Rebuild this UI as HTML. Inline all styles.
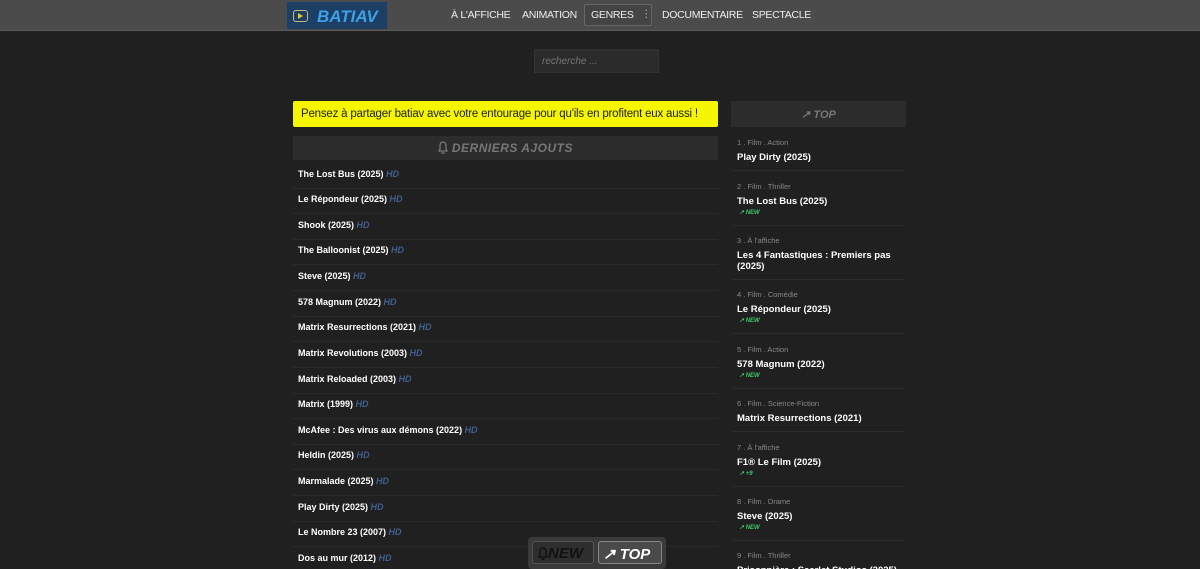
<!DOCTYPE html>
<html><head><meta charset="utf-8"><style>
*{box-sizing:border-box;margin:0;padding:0}
html,body{width:1200px;height:569px;overflow:hidden}
body{background:#202020;font-family:"Liberation Sans",Arial,sans-serif;position:relative;color:#fff}
.hdr{position:absolute;left:0;top:0;width:1200px;height:31px;background:#4b4b4b;border-bottom:1px solid #5a5a5a}
.logo{position:absolute;left:287px;top:2px;width:100px;height:27px;background:#1d3f66;overflow:hidden}
.logo .ic{position:absolute;left:6px;top:8px;width:15px;height:12px;border:1.5px solid #c9b878;border-radius:3px}
.logo .ic:after{content:"";position:absolute;left:4px;top:2px;border-left:5px solid #e3c03a;border-top:3px solid transparent;border-bottom:3px solid transparent}
.logo b{position:absolute;left:30px;top:5px;font-size:17px;font-style:italic;color:#3ea0e6}
.nav{position:absolute;top:9px;font-size:10.5px;color:#eee;white-space:nowrap;letter-spacing:-0.3px}
.gen{position:absolute;left:584px;top:4px;width:68px;height:22px;border:1px solid #666;background:#444;border-radius:2px}
.search{position:absolute;left:534px;top:49px;width:125px;height:24px;background:#2b2b2b;border:1px solid #333;font-size:10px;font-style:italic;color:#777;padding:6px 0 0 7px}
.yel{position:absolute;left:293px;top:101px;width:425px;height:26px;background:#f6f600;color:#222;font-size:11.5px;padding:7px 0 0 8px;border-radius:2px;white-space:nowrap;letter-spacing:-0.2px}
.dh{position:absolute;left:293px;top:136px;width:425px;height:24px;background:#2c2c2c;color:#777;font-size:12px;font-weight:bold;font-style:italic;text-align:center;padding-top:5px;letter-spacing:.5px}
.row{position:absolute;left:293px;width:425px;height:25px;border-bottom:1px solid #2a2a2a;font-size:9px;font-weight:bold;padding:5px 0 0 5px}
.row i{color:#3f5f8f;font-weight:bold}
.th{position:absolute;left:731px;top:101px;width:175px;height:26px;background:#2c2c2c;color:#777;font-size:11px;font-weight:bold;font-style:italic;text-align:center;padding-top:7px}
.cat{position:absolute;left:737px;font-size:7.5px;color:#888}
.tt{position:absolute;left:737px;font-size:9.5px;font-weight:bold;width:165px;line-height:11px}
.nw{position:absolute;left:739px;font-size:6px;color:#3cc86a;font-style:italic;font-weight:bold}
.sep{position:absolute;left:733px;width:172px;border-top:1px solid #2c2c2c}
.fb{position:absolute;left:528px;top:537px;width:138px;height:32px;background:#3a3a3a;border-radius:4px}
.fb div{position:absolute;top:4px;height:23px;border:1px solid #555;border-radius:3px;font-weight:bold;font-style:italic;font-size:15px;padding-top:3px;white-space:nowrap}
svg{vertical-align:-2px}
</style></head><body>
<div class="hdr">
<div class="logo"><div class="ic"></div><b>BATIAV</b></div>
<span class="nav" style="left:451px">À L'AFFICHE</span>
<span class="nav" style="left:522px">ANIMATION</span>
<div class="gen"><span class="nav" style="left:6px;top:4px">GENRES</span><span class="nav" style="left:56px;top:3px;color:#aaa">⋮</span></div>
<span class="nav" style="left:662px">DOCUMENTAIRE</span>
<span class="nav" style="left:752px">SPECTACLE</span>
</div>
<div class="search">recherche ...</div>
<div class="yel">Pensez à partager batiav avec votre entourage pour qu'ils en profitent eux aussi !</div>
<div class="dh"><svg width="10" height="13" viewBox="0 0 10 13"><path d="M5 1C2.8 1 2 3 2 5v3L1 10h8L8 8V5C8 3 7.2 1 5 1zM3.8 11.2a1.2 1.2 0 0 0 2.4 0" fill="none" stroke="#777" stroke-width="1.3"/></svg> DERNIERS AJOUTS</div>
<div class="row" style="top:164px">The Lost Bus (2025) <i>HD</i></div>
<div class="row" style="top:189px">Le Répondeur (2025) <i>HD</i></div>
<div class="row" style="top:215px">Shook (2025) <i>HD</i></div>
<div class="row" style="top:240px">The Balloonist (2025) <i>HD</i></div>
<div class="row" style="top:266px">Steve (2025) <i>HD</i></div>
<div class="row" style="top:292px">578 Magnum (2022) <i>HD</i></div>
<div class="row" style="top:317px">Matrix Resurrections (2021) <i>HD</i></div>
<div class="row" style="top:343px">Matrix Revolutions (2003) <i>HD</i></div>
<div class="row" style="top:369px">Matrix Reloaded (2003) <i>HD</i></div>
<div class="row" style="top:394px">Matrix (1999) <i>HD</i></div>
<div class="row" style="top:420px">McAfee : Des virus aux démons (2022) <i>HD</i></div>
<div class="row" style="top:445px">Heldin (2025) <i>HD</i></div>
<div class="row" style="top:471px">Marmalade (2025) <i>HD</i></div>
<div class="row" style="top:497px">Play Dirty (2025) <i>HD</i></div>
<div class="row" style="top:522px">Le Nombre 23 (2007) <i>HD</i></div>
<div class="row" style="top:548px">Dos au mur (2012) <i>HD</i></div>

<div class="th">↗ TOP</div>
<div class="cat" style="top:138px">1 . Film . Action</div><div class="tt" style="top:152px">Play Dirty (2025)</div><div class="sep" style="top:170px"></div>
<div class="cat" style="top:182px">2 . Film . Thriller</div><div class="tt" style="top:196px">The Lost Bus (2025)</div><div class="nw" style="top:209px">↗ NEW</div><div class="sep" style="top:225px"></div>
<div class="cat" style="top:236px">3 . À l'affiche</div><div class="tt" style="top:250px">Les 4 Fantastiques : Premiers pas (2025)</div><div class="sep" style="top:279px"></div>
<div class="cat" style="top:290px">4 . Film . Comédie</div><div class="tt" style="top:304px">Le Répondeur (2025)</div><div class="nw" style="top:317px">↗ NEW</div><div class="sep" style="top:333px"></div>
<div class="cat" style="top:345px">5 . Film . Action</div><div class="tt" style="top:359px">578 Magnum (2022)</div><div class="nw" style="top:372px">↗ NEW</div><div class="sep" style="top:388px"></div>
<div class="cat" style="top:399px">6 . Film . Science-Fiction</div><div class="tt" style="top:413px">Matrix Resurrections (2021)</div><div class="sep" style="top:431px"></div>
<div class="cat" style="top:443px">7 . À l'affiche</div><div class="tt" style="top:457px">F1® Le Film (2025)</div><div class="nw" style="top:470px">↗ +9</div><div class="sep" style="top:486px"></div>
<div class="cat" style="top:497px">8 . Film . Drame</div><div class="tt" style="top:511px">Steve (2025)</div><div class="nw" style="top:524px">↗ NEW</div><div class="sep" style="top:540px"></div>
<div class="cat" style="top:551px">9 . Film . Thriller</div><div class="tt" style="top:565px">Prisonnière : Scarlet Studios (2025)</div>

<div class="fb">
<div style="left:4px;width:62px;background:#2e2e2e;color:#111;padding-left:5px"><svg width="10" height="13" viewBox="0 0 10 13"><path d="M5 1C2.8 1 2 3 2 5v3L1 10h8L8 8V5C8 3 7.2 1 5 1zM3.8 11.2a1.2 1.2 0 0 0 2.4 0" fill="none" stroke="#111" stroke-width="1.4"/></svg>NEW</div>
<div style="left:70px;width:64px;background:#4a4a4a;border-color:#888;color:#fff;padding-left:4px">↗ TOP</div>
</div>
</body></html>
